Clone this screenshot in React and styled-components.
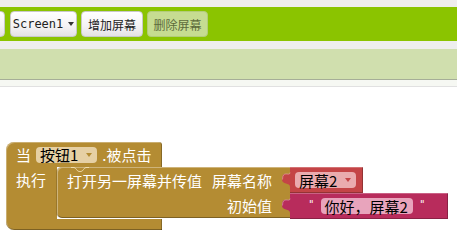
import React from 'react';
import styled, { createGlobalStyle } from 'styled-components';

const GOLD = '#b48c33';
const RED = '#c44446';
const PINK = '#b82c5c';

const GlobalStyle = createGlobalStyle`
  html, body {
    margin: 0;
    padding: 0;
    background: #fff;
    overflow: hidden;
  }
  body {
    font-family: "Noto Sans CJK SC", "DejaVu Sans", sans-serif;
  }
`;

const Page = styled.div`
  width: 457px;
  height: 239px;
  display: flex;
  flex-direction: column;
  overflow: hidden;
`;

const TopStrip = styled.div`
  height: 7px;
  background: #efeded;
`;

const Toolbar = styled.div`
  height: 34px;
  background: #8bc400;
  display: flex;
  align-items: center;
  gap: 4px;
  overflow: hidden;
`;

const Button = styled.button`
  width: ${(p) => p.$w}px;
  height: 26px;
  box-sizing: border-box;
  padding: 0;
  border: 1px solid ${(p) => (p.$disabled ? '#b3cc7a' : '#c9c9c9')};
  border-radius: 4px;
  background: ${(p) =>
    p.$disabled ? '#c6dc91' : 'linear-gradient(#ffffff, #f4f2f4 60%, #e4e2e4)'};
  color: ${(p) => (p.$disabled ? '#5d6b3c' : '#222')};
  font-family: "DejaVu Sans Mono", "Noto Sans CJK SC", monospace;
  font-size: 12px;
  display: flex;
  align-items: center;
  justify-content: center;
  gap: 5px;
  flex-shrink: 0;
  &.cut {
    margin-left: -40px;
    margin-right: 1px;
  }
`;

const Caret = styled.span`
  width: 0;
  height: 0;
  border-left: 3px solid transparent;
  border-right: 3px solid transparent;
  border-top: 4px solid ${(p) => p.$color || '#333'};
  display: inline-block;
`;

const Gap = styled.div`
  height: 8px;
  background: #eeeeee;
`;

const Panel = styled.div`
  height: 30px;
  background: #d0dfae;
  border-bottom: 1px solid #a6ae98;
`;

const SubStrip = styled.div`
  height: 6px;
  background: #f6f8f3;
  border-bottom: 1px solid #e1e1e1;
`;

const Workspace = styled.div`
  position: relative;
  flex: 1;
  background: #fff;
  font-family: "Noto Sans CJK SC", sans-serif;
  font-size: 15px;
  color: #fff;
`;

const EventBlock = styled.div`
  position: absolute;
  left: 6px;
  top: 55px;
  display: flex;
  flex-direction: column;
`;

const Cap = styled.div`
  width: 156px;
  height: 25px;
  box-sizing: border-box;
  background: ${GOLD};
  border-radius: 8px 3px 0 0;
  display: flex;
  align-items: center;
  gap: 5px;
  padding-left: 10px;
  box-shadow: inset 1px 1px 0 rgba(255, 255, 255, 0.3), inset -1px 0 0 rgba(0, 0, 0, 0.25);
`;

const Field = styled.span`
  height: 16px;
  box-sizing: border-box;
  display: flex;
  align-items: center;
  gap: 8px;
  padding: 0 5px 0 4px;
  border-radius: 4px;
  background: ${(p) => p.$bg};
  color: #000;
  font-size: 15px;
`;

const BodyRow = styled.div`
  display: flex;
  align-items: flex-start;
`;

const Arm = styled.div`
  width: 51px;
  align-self: stretch;
  box-sizing: border-box;
  background: ${GOLD};
  padding: 2px 0 0 10px;
  box-shadow: inset 1px 0 0 rgba(255, 255, 255, 0.3);
`;

const Statement = styled.div`
  display: flex;
  align-items: flex-start;
`;

const StatementBody = styled.div`
  position: relative;
  width: 233px;
  height: 51px;
  box-sizing: border-box;
  background: ${GOLD};
  border-radius: 5px 0 0 5px;
  display: flex;
  flex-direction: column;
  box-shadow: inset 1px 1px 0 rgba(255, 255, 255, 0.35), inset 0 -1px 0 rgba(0, 0, 0, 0.3),
    -1px 0 0 rgba(0, 0, 0, 0.15);
`;

const Notch = styled.svg`
  position: absolute;
  left: 14px;
  top: 0;
`;

const LabelRow = styled.div`
  height: ${(p) => p.$h}px;
  display: flex;
  align-items: center;
  justify-content: ${(p) => (p.$end ? 'flex-end' : 'space-between')};
  padding: 0 18px 0 10px;
  white-space: nowrap;
`;

const Inputs = styled.div`
  display: flex;
  flex-direction: column;
  align-items: flex-start;
`;

const ValueBlock = styled.div`
  position: relative;
  height: 26px;
  box-sizing: border-box;
  background: ${(p) => p.$bg};
  display: flex;
  align-items: center;
  gap: 7px;
  padding: ${(p) => p.$pad};
  box-shadow: inset 0 1px 0 rgba(255, 255, 255, 0.25), inset -1px -1px 0 rgba(0, 0, 0, 0.25);
`;

const Tab = styled.svg`
  position: absolute;
  left: -8px;
  top: 5px;
`;

const Quote = styled.span`
  font-family: "DejaVu Sans", sans-serif;
  font-size: 10px;
  font-style: italic;
  color: #fff;
  margin-top: -4px;
`;

const Bottom = styled.div`
  width: 156px;
  height: 11px;
  background: ${GOLD};
  border-radius: 0 0 0 8px;
  box-shadow: inset 1px 0 0 rgba(255, 255, 255, 0.3), inset 0 -1px 0 rgba(0, 0, 0, 0.3),
    inset -1px 0 0 rgba(0, 0, 0, 0.25);
`;

const PuzzleTab = ({ color }) => (
  <Tab width="9" height="16" viewBox="0 0 9 16">
    <path d="M9 0 H8 C8 5 0 -3 0 7.5 C0 13 8 10 8 15 H9 Z" fill={color} />
    <path d="M8 0.5 C8 5 0.5 -2.5 0.5 7.5" fill="none" stroke="rgba(255,255,255,0.35)" />
  </Tab>
);

export default function App() {
  return (
    <Page>
      <GlobalStyle />
      <TopStrip />
      <Toolbar>
        <Button className="cut" $w={45} />
        <Button $w={67}>
          Screen1 <Caret />
        </Button>
        <Button $w={62}>增加屏幕</Button>
        <Button $w={61} $disabled>
          删除屏幕
        </Button>
      </Toolbar>
      <Gap />
      <Panel />
      <SubStrip />
      <Workspace>
        <EventBlock>
          <Cap>
            <span>当</span>
            <Field $bg="#e6d0a4">
              按钮1 <Caret $color={GOLD} />
            </Field>
            <span>.被点击</span>
          </Cap>
          <BodyRow>
            <Arm>执行</Arm>
            <Statement>
              <StatementBody>
                <Notch width="18" height="6" viewBox="0 0 18 6">
                  <path
                    d="M0 0.5 H3 C5 0.5 6 4.5 8 4.5 H10 C12 4.5 13 0.5 15 0.5 H18"
                    fill="none"
                    stroke="rgba(255,240,200,0.7)"
                  />
                </Notch>
                <LabelRow $h={26}>
                  <span>打开另一屏幕并传值</span>
                  <span>屏幕名称</span>
                </LabelRow>
                <LabelRow $h={25} $end>
                  <span>初始值</span>
                </LabelRow>
              </StatementBody>
              <Inputs>
                <ValueBlock $bg={RED} $pad="0 7px 0 5px">
                  <PuzzleTab color={RED} />
                  <Field $bg="#eaabae">
                    屏幕2 <Caret $color={RED} />
                  </Field>
                </ValueBlock>
                <ValueBlock $bg={PINK} $pad="0 23px 0 19px">
                  <PuzzleTab color={PINK} />
                  <Quote>"</Quote>
                  <Field $bg="#e8a4bc">你好，屏幕2</Field>
                  <Quote>"</Quote>
                </ValueBlock>
              </Inputs>
            </Statement>
          </BodyRow>
          <Bottom />
        </EventBlock>
      </Workspace>
    </Page>
  );
}
